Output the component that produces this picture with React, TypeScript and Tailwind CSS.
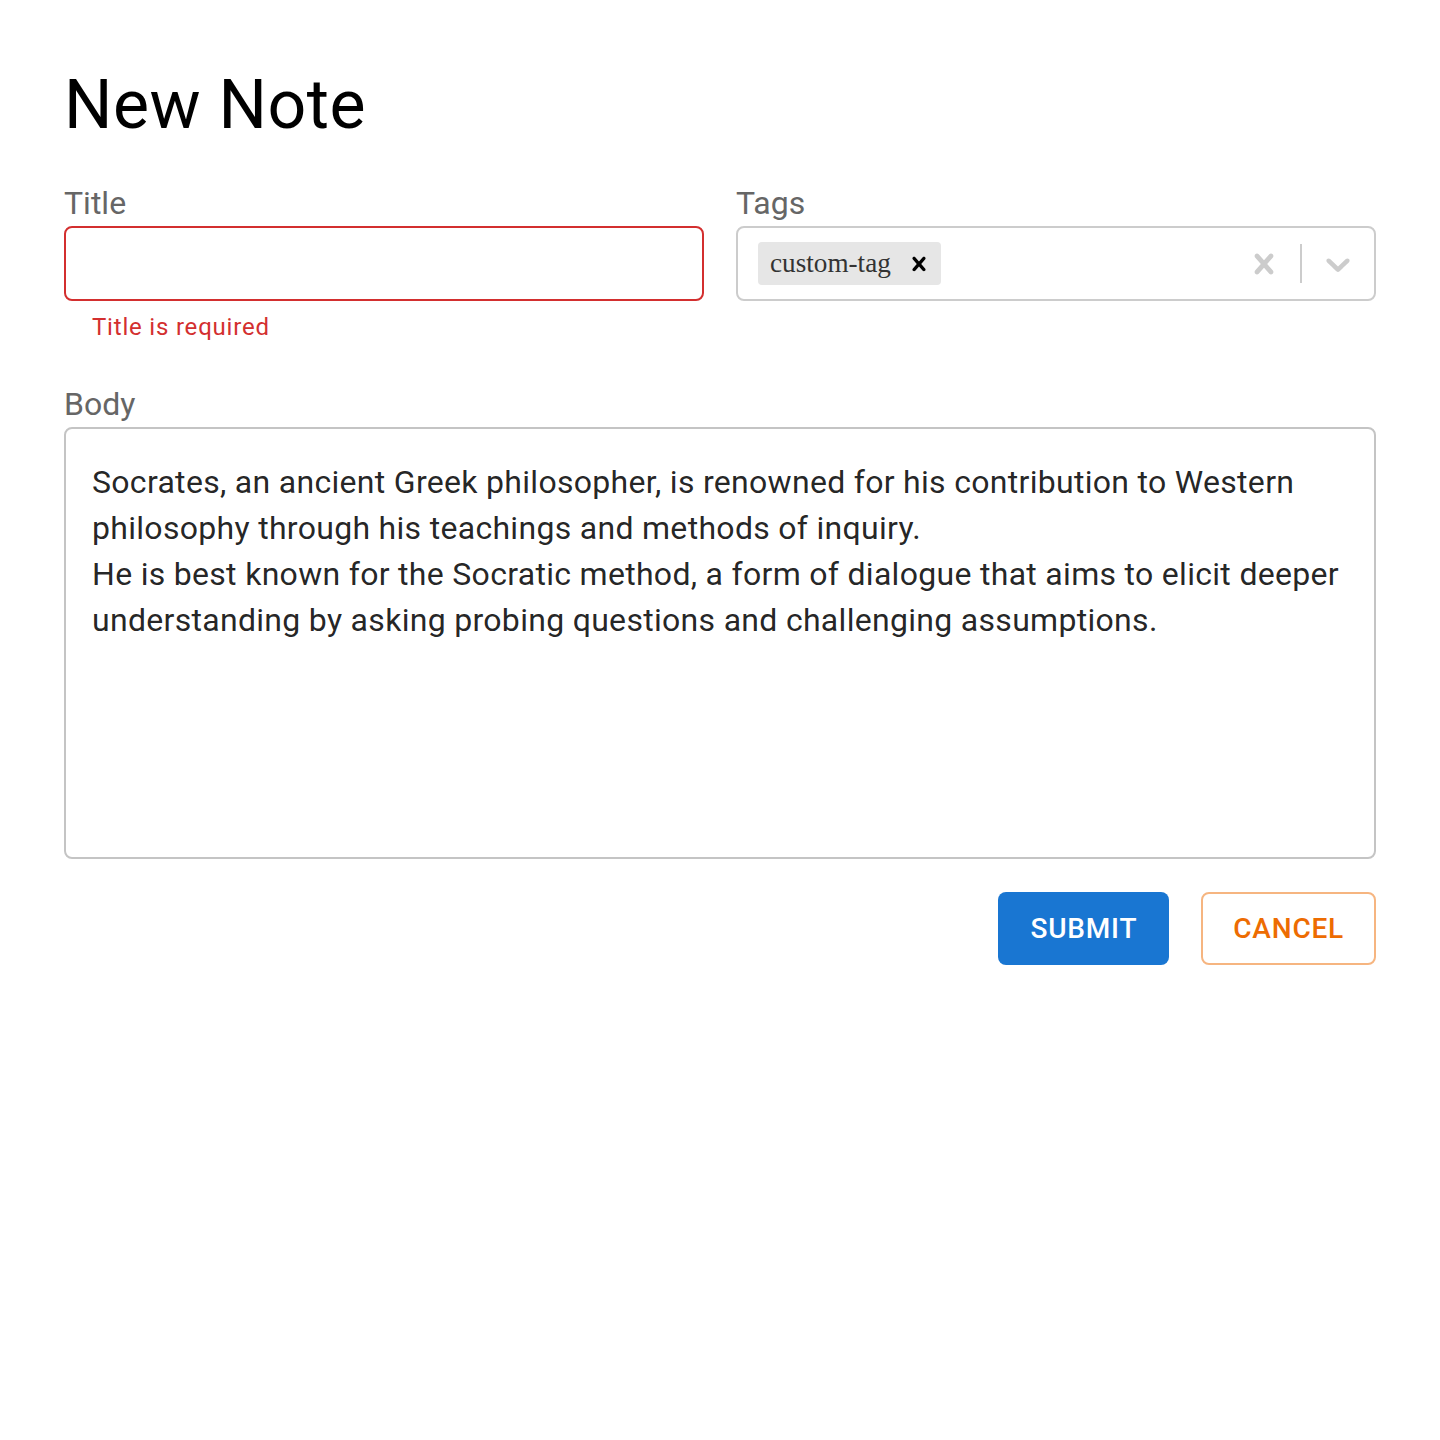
import type { ReactNode } from "react";

const roboto = "font-['Roboto','Helvetica','Arial',sans-serif]";

const bodyText =
  "Socrates, an ancient Greek philosopher, is renowned for his contribution to Western philosophy through his teachings and methods of inquiry.\nHe is best known for the Socratic method, a form of dialogue that aims to elicit deeper understanding by asking probing questions and challenging assumptions.";

function CrossIcon({ className }: { className?: string }) {
  return (
    <svg viewBox="0 0 20 20" className={className} fill="currentColor" aria-hidden="true">
      <path d="M14.348 14.849c-0.469 0.469-1.229 0.469-1.697 0l-2.651-3.030-2.651 3.029c-0.469 0.469-1.229 0.469-1.697 0-0.469-0.469-0.469-1.229 0-1.697l2.758-3.15-2.759-3.152c-0.469-0.469-0.469-1.228 0-1.697s1.228-0.469 1.697 0l2.652 3.031 2.651-3.031c0.469-0.469 1.228-0.469 1.697 0s0.469 1.229 0 1.697l-2.758 3.152 2.758 3.15c0.469 0.469 0.469 1.229 0 1.698z" />
    </svg>
  );
}

function ChevronIcon({ className }: { className?: string }) {
  return (
    <svg viewBox="0 0 20 20" className={className} fill="currentColor" aria-hidden="true">
      <path d="M4.516 7.548c0.436-0.446 1.043-0.481 1.576 0l3.908 3.747 3.908-3.747c0.533-0.481 1.141-0.446 1.574 0 0.436 0.445 0.408 1.197 0 1.615-0.406 0.418-4.695 4.502-4.695 4.502-0.217 0.223-0.502 0.335-0.787 0.335s-0.57-0.112-0.789-0.335c0 0-4.287-4.084-4.695-4.502s-0.436-1.17 0-1.615z" />
    </svg>
  );
}

function Label({ children }: { children: ReactNode }) {
  return <label className="block pt-[1px] text-[32px] leading-[46px] text-[#666666]">{children}</label>;
}

function TagsSelect() {
  return (
    <div className="flex h-[75px] items-center rounded-[8px] border-2 border-[#cccccc] bg-white">
      <div className="flex flex-1 items-center px-[16px]">
        <div className="m-[4px] flex items-center rounded-[4px] bg-[#e6e6e6]">
          <span className="py-[6px] pl-[12px] pr-[6px] font-['Liberation_Serif','Times_New_Roman',serif] text-[27.2px] leading-[1.15] text-[#333333]">
            custom-tag
          </span>
          <span className="flex items-center px-[8px] text-black">
            <CrossIcon className="h-[28px] w-[28px]" />
          </span>
        </div>
      </div>
      <div className="flex h-full items-center">
        <span className="flex p-[16px] text-[#cccccc]">
          <CrossIcon className="h-[40px] w-[40px]" />
        </span>
        <span className="my-[16px] w-[2px] self-stretch bg-[#cccccc]" />
        <span className="flex p-[16px] text-[#cccccc]">
          <ChevronIcon className="h-[40px] w-[40px]" />
        </span>
      </div>
    </div>
  );
}

export default function App() {
  return (
    <div className={`${roboto} min-h-[1440px] bg-white px-[64px] pt-[63px]`}>
      <h1 className="text-[68px] leading-[84px] font-normal tracking-[0.5px] text-black">New Note</h1>

      <div className="mt-[32px] grid grid-cols-2 gap-x-[32px]">
        <div>
          <Label>Title</Label>
          <input
            type="text"
            className="block h-[75px] w-full rounded-[8px] border-2 border-[#d32f2f] bg-white px-[28px] text-[32px] outline-none"
          />
          <p className="mx-[28px] mt-[6px] text-[24px] leading-[40px] tracking-[0.8px] text-[#d32f2f]">
            Title is required
          </p>
        </div>
        <div>
          <Label>Tags</Label>
          <TagsSelect />
        </div>
      </div>

      <div className="mt-[33px]">
        <Label>Body</Label>
        <div className="h-[432px] rounded-[8px] border-2 border-[#c4c4c4] px-[26px] pt-[30px]">
          <p className="whitespace-pre-line text-[32px] leading-[46px] tracking-[0.3px] text-[rgba(0,0,0,0.87)]">
            {bodyText}
          </p>
        </div>
      </div>

      <div className="mt-[33px] flex justify-end gap-[32px]">
        <button className="h-[73px] rounded-[8px] bg-[#1976d2] px-[32px] text-[28px] font-medium uppercase tracking-[0.8px] text-white">
          Submit
        </button>
        <button className="h-[73px] rounded-[8px] border-2 border-[#f6b580] bg-white px-[30px] text-[28px] font-medium uppercase tracking-[0.8px] text-[#ed6c02]">
          Cancel
        </button>
      </div>
    </div>
  );
}
